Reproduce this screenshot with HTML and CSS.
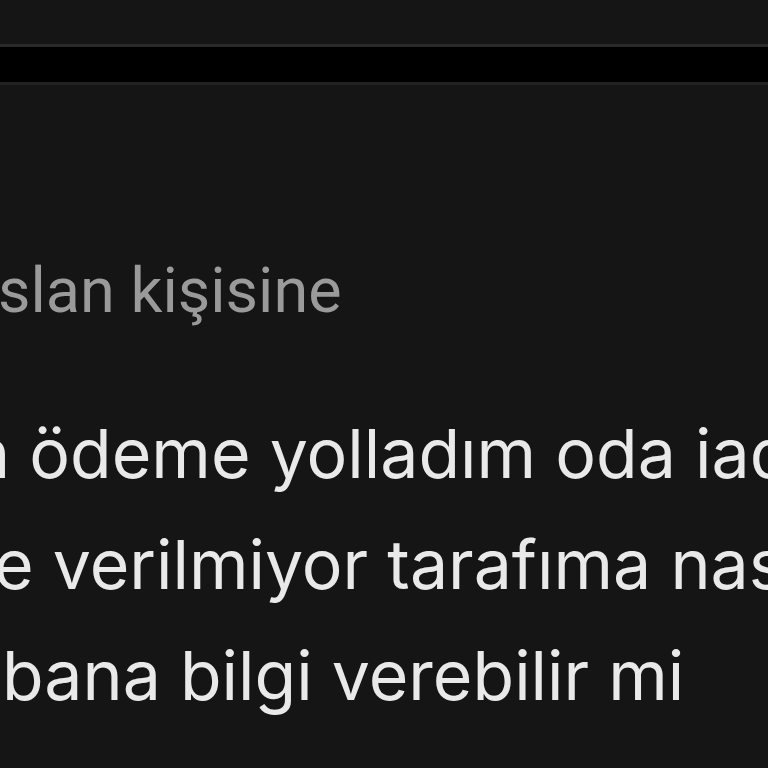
FILE: index.html
```html
<!DOCTYPE html>
<html lang="tr">
<head>
    <meta charset="UTF-8">
    <title>Mesaj</title>
    <link rel="stylesheet" href="styles.css">
</head>
<body>
    <header class="top-bar"></header>
    <div class="black-band"></div>

    <main class="message">
        <div class="meta">slan kişisine</div>
        <div class="body-text">
            <div class="line line-1">n ödeme yolladım oda iade ediyor</div>
            <div class="line line-2">e verilmiyor tarafıma nasıl</div>
            <div class="line line-3">bana bilgi verebilir mi</div>
        </div>
    </main>
</body>
</html>
```

FILE: styles.css
```css
* {
    margin: 0;
    padding: 0;
    box-sizing: border-box;
}

body {
    background: #151515;
    width: 768px;
    height: 768px;
    overflow: hidden;
    font-family: 'Inter', sans-serif;
}

/* Bars */
.top-bar {
    height: 47px;
    border-bottom: 3px solid #2a2a2a;
}

.black-band {
    height: 38px;
    background: #000000;
    border-bottom: 3px solid #222222;
}

/* Message */
.message {
    padding-top: 171px;
    white-space: nowrap;
    overflow: hidden;
}

.meta {
    font-family: 'Roboto', sans-serif;
    font-size: 63px;
    line-height: 70px;
    color: #9a9a9a;
    margin-left: -2px;
}

.body-text {
    margin-top: 72px;
    color: #e9e9e9;
    font-size: 68px;
    line-height: 111px;
}

.line-1 {
    margin-left: -30px;
}

.line-2 {
    margin-left: -6px;
}

.line-3 {
    margin-left: 2px;
}
```
